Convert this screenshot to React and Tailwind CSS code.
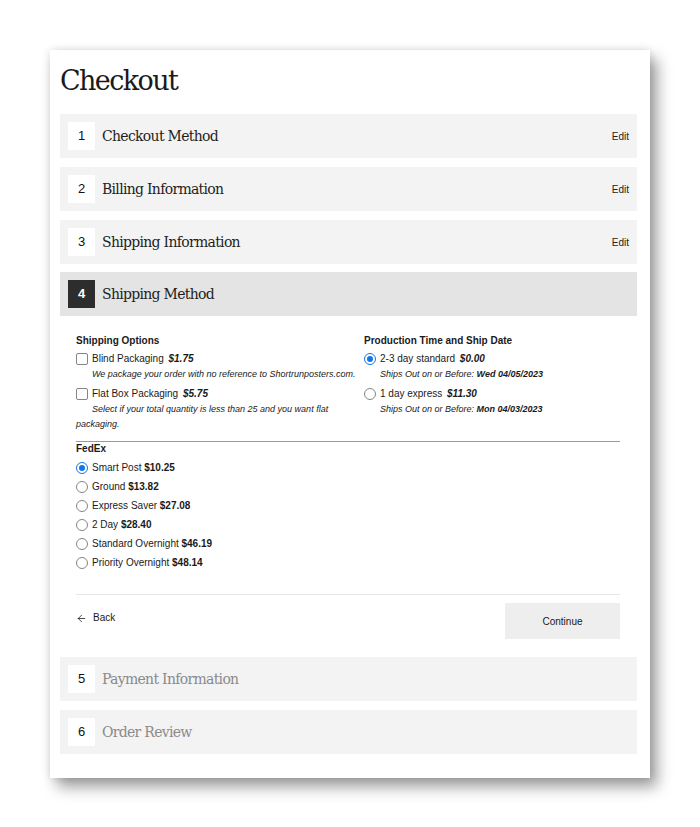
import React from "react";
import { ArrowLeft } from "lucide-react";

const serif = { fontFamily: '"DejaVu Serif", serif' };

function StepRow({ n, title, edit, active, muted }) {
  return (
    <div
      className={
        "h-[44px] flex items-center pl-[8px] pr-[8px] " +
        (active ? "bg-[#e4e4e4]" : "bg-[#f3f3f3]")
      }
    >
      <div
        className={
          "w-[27px] h-[28px] flex items-center justify-center text-[13px] " +
          (active ? "bg-[#2d2d2d] text-white font-bold" : "bg-white text-[#111]")
        }
      >
        {n}
      </div>
      <div
        className={
          "ml-[7px] mt-[1px] text-[14px] tracking-[-0.7px] " +
          (muted ? "text-[#8a8a8a]" : "text-[#1e1e1e]")
        }
        style={serif}
      >
        {title}
      </div>
      {edit && <div className="ml-auto text-[10px] text-[#222]">Edit</div>}
    </div>
  );
}

function Checkbox() {
  return (
    <span className="w-[12px] h-[12px] shrink-0 rounded-[2px] border border-[#858585] bg-white" />
  );
}

function Radio({ checked }) {
  if (checked) {
    return (
      <span className="w-[12px] h-[12px] shrink-0 rounded-full border-[1.5px] border-[#1574e8] bg-white flex items-center justify-center">
        <span className="w-[6px] h-[6px] rounded-full bg-[#1574e8]" />
      </span>
    );
  }
  return (
    <span className="w-[12px] h-[12px] shrink-0 rounded-full border border-[#858585] bg-white" />
  );
}

function FedExOption({ label, price, checked }) {
  return (
    <div className="flex items-center gap-[4px] leading-[14px]">
      <Radio checked={checked} />
      <span>
        {label} <span className="font-bold">{price}</span>
      </span>
    </div>
  );
}

export default function App() {
  return (
    <div
      className="min-h-[827px] bg-white pt-[50px] pl-[50px]"
      style={{ fontFamily: '"Liberation Sans", Arial, sans-serif' }}
    >
      <div className="w-[600px] bg-white pl-[10px] pr-[13px] pt-[15px] pb-[24px] shadow-[0_0_8px_rgba(0,0,0,0.12),7px_9px_14px_rgba(0,0,0,0.38)]">
        <h1
          className="text-[27px] leading-[32px] tracking-[-1.6px] text-[#1a1a1a] mb-[17px]"
          style={serif}
        >
          Checkout
        </h1>
        <div className="flex flex-col gap-[9px]">
          <StepRow n="1" title="Checkout Method" edit />
          <StepRow n="2" title="Billing Information" edit />
          <StepRow n="3" title="Shipping Information" edit />
          <div className="-mt-[1px]">
            <StepRow n="4" title="Shipping Method" active />
            <div className="pl-[16px] pr-[17px] pt-[18px] pb-[9px] text-[10px] text-[#1a1a1a]">
              <div className="flex">
                <div className="w-[288px] shrink-0">
                  <div className="font-bold leading-[14px] mb-[4px]">Shipping Options</div>
                  <div className="flex items-center gap-[4px] leading-[14px]">
                    <Checkbox />
                    <span>
                      Blind Packaging{" "}
                      <span className="font-bold italic ml-[2px]">$1.75</span>
                    </span>
                  </div>
                  <div className="text-[9px] italic leading-[15px] mt-[1px] indent-[16px] whitespace-nowrap">
                    We package your order with no reference to Shortrunposters.com.
                  </div>
                  <div className="flex items-center gap-[4px] leading-[14px] mt-[5px]">
                    <Checkbox />
                    <span>
                      Flat Box Packaging{" "}
                      <span className="font-bold italic ml-[2px]">$5.75</span>
                    </span>
                  </div>
                  <div className="text-[9px] italic leading-[15px] mt-[1px] indent-[16px]">
                    Select if your total quantity is less than 25 and you want flat
                    <br />
                    packaging.
                  </div>
                </div>
                <div className="flex-1">
                  <div className="font-bold leading-[14px] mb-[4px]">
                    Production Time and Ship Date
                  </div>
                  <div className="flex items-center gap-[4px] leading-[14px]">
                    <Radio checked />
                    <span>
                      2-3 day standard{" "}
                      <span className="font-bold italic ml-[2px]">$0.00</span>
                    </span>
                  </div>
                  <div className="text-[9px] italic leading-[15px] mt-[1px] pl-[16px]">
                    Ships Out on or Before: <span className="font-bold">Wed 04/05/2023</span>
                  </div>
                  <div className="flex items-center gap-[4px] leading-[14px] mt-[5px]">
                    <Radio />
                    <span>
                      1 day express{" "}
                      <span className="font-bold italic ml-[2px]">$11.30</span>
                    </span>
                  </div>
                  <div className="text-[9px] italic leading-[15px] mt-[1px] pl-[16px]">
                    Ships Out on or Before: <span className="font-bold">Mon 04/03/2023</span>
                  </div>
                </div>
              </div>
              <div className="mt-[9px] border-t border-[#9a9a9a]" />
              <div className="flex flex-col gap-[5px]">
                <div className="font-bold leading-[14px]">FedEx</div>
                <FedExOption label="Smart Post" price="$10.25" checked />
                <FedExOption label="Ground" price="$13.82" />
                <FedExOption label="Express Saver" price="$27.08" />
                <FedExOption label="2 Day" price="$28.40" />
                <FedExOption label="Standard Overnight" price="$46.19" />
                <FedExOption label="Priority Overnight" price="$48.14" />
              </div>
              <div className="mt-[24px] border-t border-[#e6e6e6]" />
              <div className="flex justify-between items-start pt-[8px]">
                <div className="mt-[8px] flex items-center gap-[6px] leading-[14px]">
                  <ArrowLeft size={11} strokeWidth={1.7} />
                  <span>Back</span>
                </div>
                <button className="w-[115px] h-[36px] bg-[#eeeeee] text-[10px] text-[#1a1a1a]">
                  Continue
                </button>
              </div>
            </div>
          </div>
          <StepRow n="5" title="Payment Information" muted />
          <StepRow n="6" title="Order Review" muted />
        </div>
      </div>
    </div>
  );
}
